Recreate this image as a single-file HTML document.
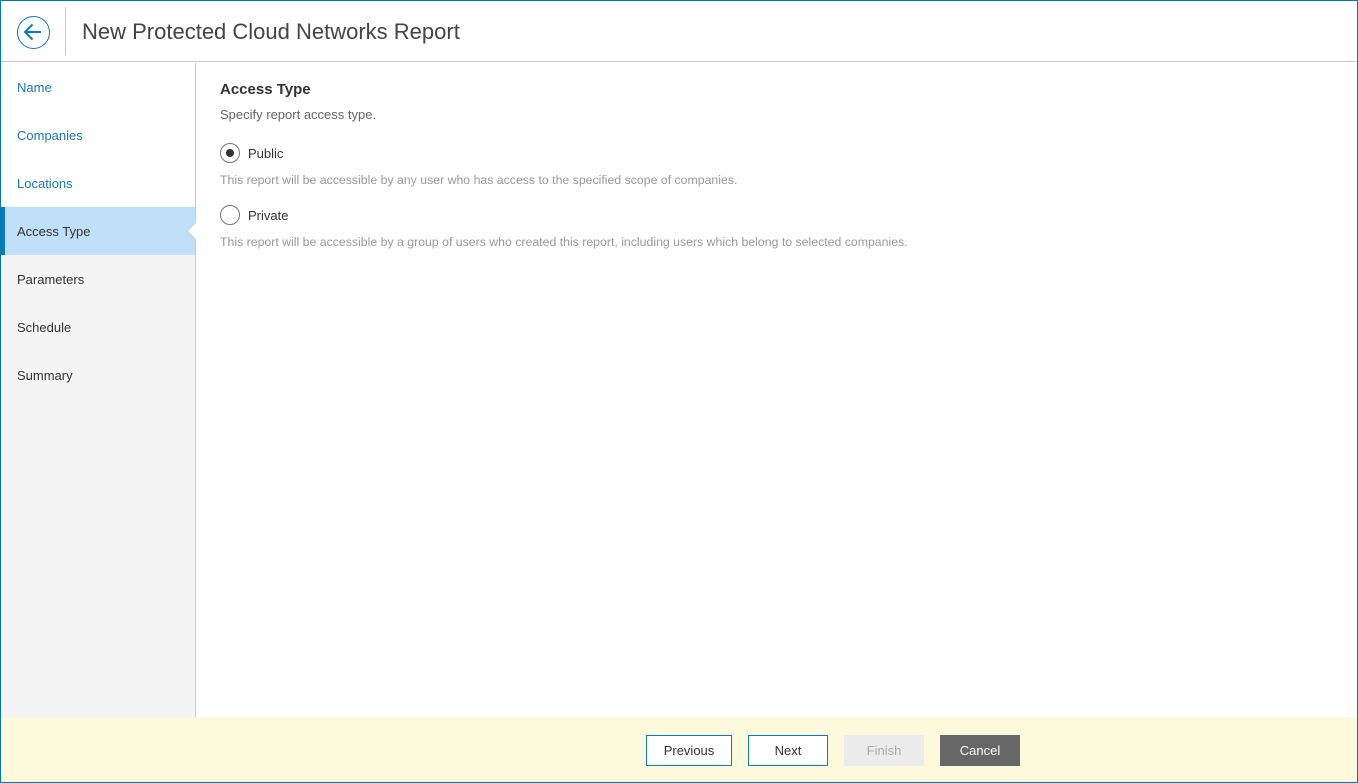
<!DOCTYPE html>
<html><head><style>
*{margin:0;padding:0;box-sizing:border-box}
body{width:1358px;height:783px;font-family:"Liberation Sans",sans-serif;background:#fff;position:relative;overflow:hidden}
.frame{position:absolute;inset:0;border:1px solid #0078b0;}
.hdr{position:absolute;left:1px;top:1px;right:1px;height:61px;border-bottom:1px solid #c8c8c8;background:#fff}
.back{position:absolute;left:16px;top:15px;width:33px;height:33px;border:1.5px solid #0f7ab5;border-radius:50%}
.sep{position:absolute;left:64px;top:6px;width:1px;height:48px;background:#ccc}
.title{position:absolute;left:81px;top:18px;font-size:22px;color:#444}
.side{position:absolute;left:1px;top:63px;width:195px;height:654px;background:#f4f4f4;border-right:1px solid #ccc}
.item{position:absolute;left:0;width:194px;height:48px;font-size:13px;color:#333;padding:17px 0 0 16px}
.done{background:#fff;color:#1a7ab0}
.act{background:#bfe0f8;border-left:4px solid #0f7ab5;padding-left:12px}
.main{position:absolute;left:220px;top:81px}
h2{font-size:15px;color:#333;font-weight:bold}
.sub{font-size:13px;color:#666;margin-top:9px}
.radio{position:absolute;left:0;width:20px;height:20px;border:1px solid #777;border-radius:50%;background:#fff}
.lbl{position:absolute;left:28px;font-size:13px;color:#333}
.desc{position:absolute;left:0;font-size:12.3px;color:#999;white-space:nowrap}
.foot{position:absolute;left:1px;right:1px;top:717px;bottom:1px;background:#fdf9dc}
.btn{position:absolute;top:735px;height:31px;font-size:13px;text-align:center;line-height:29px}
.nb{line-height:31px}
</style></head><body>
<div class="hdr">
<div class="back"><svg width="30" height="30" viewBox="0 0 30 30" style="position:absolute;left:0;top:0"><path d="M23 15H7M14.5 7.5L7 15l7.5 7.5" fill="none" stroke="#0f7ab5" stroke-width="2"/></svg></div>
<div class="sep"></div>
<div class="title">New Protected Cloud Networks Report</div>
</div>
<div class="side">
<div class="item done" style="top:0">Name</div>
<div class="item done" style="top:48px">Companies</div>
<div class="item done" style="top:96px">Locations</div>
<div class="item act" style="top:144px">Access Type</div>
<div style="position:absolute;left:188px;top:162px;width:12px;height:12px;background:#fff;border-left:1px solid #ccc;border-bottom:1px solid #ccc;transform:rotate(45deg)"></div>
<div class="item" style="top:192px">Parameters</div>
<div class="item" style="top:240px">Schedule</div>
<div class="item" style="top:288px">Summary</div>
</div>
<div class="main">
<h2>Access Type</h2>
<div class="sub">Specify report access type.</div>
<div class="radio" style="top:62px"><div style="position:absolute;left:5px;top:5px;width:8px;height:8px;border-radius:50%;background:#333"></div></div>
<div class="lbl" style="top:65px">Public</div>
<div class="desc" style="top:92px">This report will be accessible by any user who has access to the specified scope of companies.</div>
<div class="radio" style="top:124px"></div>
<div class="lbl" style="top:127px">Private</div>
<div class="desc" style="top:154px">This report will be accessible by a group of users who created this report, including users which belong to selected companies.</div>
</div>
<div class="foot"></div>
<div class="btn" style="left:646px;width:86px;border:1px solid #0f7ab5;background:#fff;color:#333">Previous</div>
<div class="btn" style="left:748px;width:80px;border:1px solid #0f7ab5;background:#fff;color:#333">Next</div>
<div class="btn nb" style="left:844px;width:80px;background:#ececec;color:#aaa">Finish</div>
<div class="btn nb" style="left:940px;width:80px;background:#666;color:#fff">Cancel</div>
<div class="frame"></div>
</body></html>
